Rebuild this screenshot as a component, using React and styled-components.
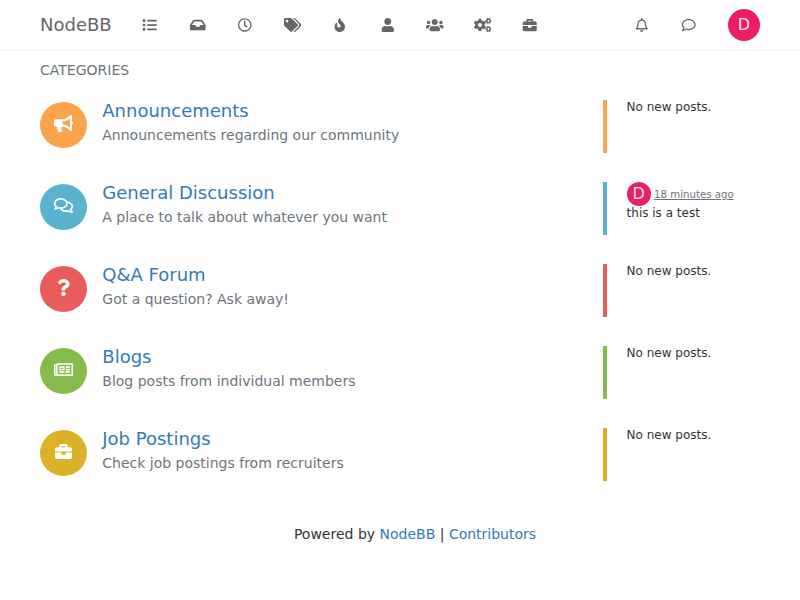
import React from 'react';
import styled, { createGlobalStyle } from 'styled-components';
import {
  FaList, FaInbox, FaRegClock, FaTags, FaFire, FaUser, FaUsers, FaCogs, FaBriefcase,
  FaRegBell, FaRegComment, FaBullhorn, FaRegComments, FaQuestion, FaRegNewspaper,
} from 'react-icons/fa';

const GlobalStyle = createGlobalStyle`
  * { box-sizing: border-box; }
  body {
    margin: 0;
    background: #fff;
    color: #333;
    font: 14px/20px "DejaVu Sans", sans-serif;
  }
  a { color: #337ab7; text-decoration: none; }
`;

const Navbar = styled.header`
  display: flex;
  align-items: center;
  height: 51px;
  padding: 0 40px;
  border-bottom: 1px solid #eee;
`;

const Brand = styled.a`
  && { color: #666; }
  width: 101px;
  font-size: 18px;
`;

const NavGroup = styled.nav`
  display: flex;
  gap: 30px;
  margin-left: ${(p) => (p.$end ? 'auto' : 0)};
  margin-right: ${(p) => (p.$end ? '30.5px' : 0)};
  padding-bottom: 1px;
`;

const NavLink = styled.a`
  && { color: #666; }
  display: flex;
  svg { width: 17.5px; height: 14px; }
`;

const Avatar = styled.span`
  display: flex;
  flex: none;
  align-items: center;
  justify-content: center;
  width: ${(p) => p.$size}px;
  height: ${(p) => p.$size}px;
  border-radius: 50%;
  background: #e91e63;
  color: rgba(255, 255, 255, 0.88);
  font-size: 16px;
`;

const Main = styled.main`
  padding: 9px 40px 0;
`;

const Heading = styled.h1`
  margin: 0 0 20px;
  color: #6c757d;
  font-size: 14px;
  font-weight: 400;
  line-height: 20px;
`;

const CategoryList = styled.ul`
  display: flex;
  flex-direction: column;
  gap: 29px;
  margin: 0;
  padding: 0;
  list-style: none;
`;

const Category = styled.li`
  display: grid;
  grid-template-columns: 62.3px 500.7px 1fr;
  height: 53px;
`;

const CategoryIcon = styled.span`
  display: flex;
  align-items: center;
  justify-content: center;
  width: 47px;
  height: 46px;
  margin-top: 2px;
  padding-bottom: 3px;
  border-radius: 50%;
  background: ${(p) => p.$color};
  color: #fff;
  svg { width: 21px; height: 17px; }
`;

const Title = styled.h2`
  margin: 0;
  font-size: 18px;
  font-weight: 400;
  line-height: 22px;
`;

const Description = styled.p`
  margin: 3px 0 0;
  color: #6c757d;
`;

const Teaser = styled.div`
  padding-left: 19.6px;
  border-left: 4px solid ${(p) => p.$color};
  font-size: 12px;
  line-height: 14px;
`;

const TeaserMeta = styled.div`
  display: flex;
  align-items: center;
  gap: 3.5px;
`;

const Timestamp = styled.a`
  && { color: #6c757d; text-decoration: underline; }
  padding-top: 2px;
  font-size: 10.2px;
`;

const Footer = styled.footer`
  margin-top: 43px;
  text-align: center;
  padding-left: 30px;
`;

const navItems = [FaList, FaInbox, FaRegClock, FaTags, FaFire, FaUser, FaUsers, FaCogs, FaBriefcase];
const userItems = [FaRegBell, FaRegComment];

const categories = [
  { name: 'Announcements', text: 'Announcements regarding our community', color: '#fda34b', Icon: FaBullhorn },
  {
    name: 'General Discussion', text: 'A place to talk about whatever you want', color: '#59b3d0', Icon: FaRegComments,
    post: { initial: 'D', time: '18 minutes ago', body: 'this is a test' },
  },
  { name: 'Q&A Forum', text: 'Got a question? Ask away!', color: '#e95c5a', Icon: FaQuestion },
  { name: 'Blogs', text: 'Blog posts from individual members', color: '#86ba4b', Icon: FaRegNewspaper },
  { name: 'Job Postings', text: 'Check job postings from recruiters', color: '#dab227', Icon: FaBriefcase },
];

export default function App() {
  return (
    <>
      <GlobalStyle />
      <Navbar>
        <Brand href="#">NodeBB</Brand>
        <NavGroup>
          {navItems.map((Icon, i) => <NavLink href="#" key={i}><Icon /></NavLink>)}
        </NavGroup>
        <NavGroup $end>
          {userItems.map((Icon, i) => <NavLink href="#" key={i}><Icon /></NavLink>)}
        </NavGroup>
        <Avatar $size={32}>D</Avatar>
      </Navbar>
      <Main>
        <Heading>CATEGORIES</Heading>
        <CategoryList>
          {categories.map(({ name, text, color, Icon, post }) => (
            <Category key={name}>
              <CategoryIcon $color={color}><Icon /></CategoryIcon>
              <div>
                <Title><a href="#">{name}</a></Title>
                <Description>{text}</Description>
              </div>
              <Teaser $color={color}>
                {post ? (
                  <>
                    <TeaserMeta>
                      <Avatar $size={24}>{post.initial}</Avatar>
                      <Timestamp href="#">{post.time}</Timestamp>
                    </TeaserMeta>
                    {post.body}
                  </>
                ) : 'No new posts.'}
              </Teaser>
            </Category>
          ))}
        </CategoryList>
        <Footer>
          Powered by <a href="#">NodeBB</a> | <a href="#">Contributors</a>
        </Footer>
      </Main>
    </>
  );
}
